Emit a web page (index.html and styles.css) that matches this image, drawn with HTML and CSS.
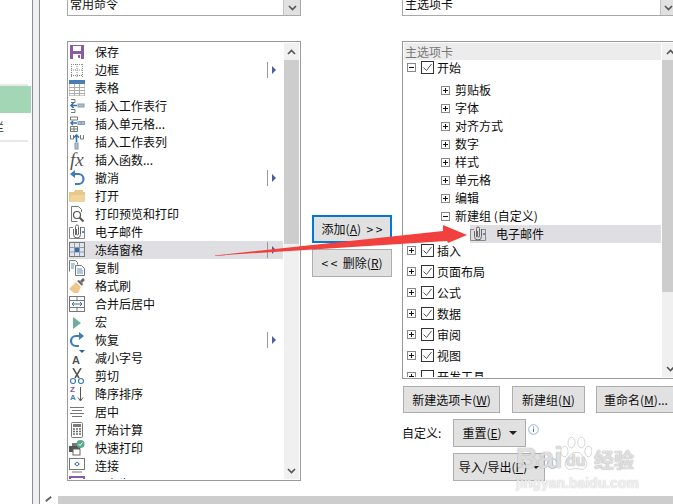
FILE: index.html
```html
<!DOCTYPE html>
<html lang="zh-CN">
  <head>
    <meta charset="UTF-8" />
    <title>自定义功能区</title>
    <link rel="stylesheet" href="styles.css">
  </head>
  <body>
    <svg class="defs" width="0" height="0">
      <symbol id="i-save" viewBox="0 0 16 16"><rect x="1" y="1" width="14" height="14" fill="#8a5ca8"/><rect x="4" y="2" width="8" height="5" fill="#fff"/><rect x="4" y="10" width="8" height="5" fill="#fff"/><rect x="9" y="11" width="2" height="3" fill="#8a5ca8"/></symbol>
      <symbol id="i-border" viewBox="0 0 16 16"><path d="M2.5 2v13M8 2v13M13.5 2v13M2 2.500h12M2 8h12M2 13.500h12" stroke="#8a8a8a" stroke-dasharray="1 1" fill="none"/></symbol>
      <symbol id="i-table" viewBox="0 0 16 16"><rect x="0" y="1" width="16" height="15" fill="#fff" stroke="#999"/><rect x="0" y="0" width="16" height="4" fill="#4a7db3"/><path d="M0 7.500h16M0 10.500h16M0 13.500h16M5.500 4v12M10.500 4v12" stroke="#aaa"/></symbol>
      <symbol id="i-insrow" viewBox="0 0 16 16"><path d="M2 1.500h4v3H2M2 11.500h4v3H2" stroke="#777" fill="none"/><rect x="9" y="6" width="6" height="3" fill="#a9c0d6" stroke="#8a9cad"/><path d="M8 7.500H2M4.500 5L2 7.500 4.500 10" stroke="#2e75b6" stroke-width="1.600" fill="none"/></symbol>
      <symbol id="i-inscell" viewBox="0 0 16 16"><path d="M1.500 1h7v3h-7zM1.500 10.500h7v5h-7zM5 10.500v5M1.500 13h7" stroke="#777" fill="none"/><rect x="9" y="5.500" width="3" height="3" fill="#a9c0d6" stroke="#8a9cad"/><rect x="12.500" y="5.500" width="3" height="3" fill="#a9c0d6" stroke="#8a9cad"/><path d="M8 7H2M4 5L2 7l2 2" stroke="#2e75b6" stroke-width="1.500" fill="none"/></symbol>
      <symbol id="i-inscol" viewBox="0 0 16 16"><path d="M1.500 1v4h3V1M11.500 1v4h3V1" stroke="#777" fill="none"/><rect x="6" y="9" width="3" height="6" fill="#a9c0d6" stroke="#8a9cad"/><path d="M7.500 8V1M5 3.500L7.500 1 10 3.500" stroke="#2e75b6" stroke-width="1.600" fill="none"/></symbol>
      <symbol id="i-undo" viewBox="0 0 16 16"><path d="M4 4h5.500a4.500 4.500 0 0 1 0 10H6" stroke="#3f7cb8" stroke-width="2.200" fill="none"/><path d="M6 0L1 4l5 4z" fill="#3f7cb8"/></symbol>
      <symbol id="i-folder" viewBox="0 0 16 16"><path d="M0 14V4h5l1-2h8v2h2v10z" fill="#e8c88a"/><path d="M0 14l2-7h14v7z" fill="#f0d49c"/></symbol>
      <symbol id="i-preview" viewBox="0 0 16 16"><path d="M2.500 15.500V.5h7l3 3V6" stroke="#777" fill="none"/><path d="M2.500 15.500h6" stroke="#777"/><circle cx="8" cy="9" r="3.500" fill="#fff" stroke="#555" stroke-width="1.200"/><path d="M10.500 11.500l4 4" stroke="#555" stroke-width="2"/></symbol>
      <symbol id="i-mail" viewBox="0 0 16 16"><path d="M4 3.500H.5v11h15v-11H12" stroke="#888" fill="none"/><path d="M6.500 11V2.500a1.500 1.500 0 0 1 3 0V10a1 1 0 0 1-2 0V5M4.500 5v5.500a3.500 3.500 0 0 0 7 0V3" stroke="#666" fill="none"/><rect x="13" y="7" width="2" height="2" fill="#5b8fc7"/></symbol>
      <symbol id="i-freeze" viewBox="0 0 16 16"><rect x=".5" y=".5" width="15" height="14" fill="#dbe6f2" stroke="#777"/><path d="M5.500 1v13M10.500 1v13M1 5.500h14M1 10h14" stroke="#999"/><rect x="6" y="6" width="4" height="4" fill="#2e6fb0"/></symbol>
      <symbol id="i-copy" viewBox="0 0 16 16"><path d="M.5 11.500V.5h6l2 2v2" stroke="#777" fill="#fff"/><path d="M6.500 5.500h6l3 3v7h-9z" stroke="#777" fill="#fff"/><path d="M8 9h5M8 11h6M8 13h6M2 4h4M2 6h3M2 8h3" stroke="#5b8fc7"/></symbol>
      <symbol id="i-brush" viewBox="0 0 16 16"><path d="M0 11l7-7 5 5-3 6H5z" fill="#ecc88c"/><path d="M8 3l5 5 1-2-4-4z" fill="#666"/><path d="M11 3l3-3 2 2-3 3z" fill="#666"/></symbol>
      <symbol id="i-merge" viewBox="0 0 16 16"><rect x=".5" y=".5" width="15" height="15" fill="#fff" stroke="#777"/><path d="M1 4.500h14M1 11.500h14M8 1v3M8 12v3" stroke="#777"/><path d="M3 8h10M5 6L3 8l2 2M11 6l2 2-2 2" stroke="#2e75b6" fill="none"/></symbol>
      <symbol id="i-macro" viewBox="0 0 16 16"><path d="M4 3l8 6-8 6z" fill="#6fae9a"/></symbol>
      <symbol id="i-redo" viewBox="0 0 16 16"><path d="M12 4H7a4.500 4.500 0 0 0 0 10h3" stroke="#3f7cb8" stroke-width="2.200" fill="none"/><path d="M10 0l5 4-5 4z" fill="#3f7cb8"/></symbol>
      <symbol id="i-cut" viewBox="0 0 16 16"><path d="M4 0l6 10M12 0L6 10" stroke="#555" stroke-width="1.500"/><circle cx="4" cy="13" r="2.500" fill="none" stroke="#3f7cb8" stroke-width="1.200"/><circle cx="12" cy="13" r="2.500" fill="none" stroke="#3f7cb8" stroke-width="1.200"/></symbol>
      <symbol id="i-sortarrow" viewBox="0 0 7 16"><path d="M3.500 1v13M1 11.500L3.500 15 6 11.500" stroke="#555" fill="none"/></symbol>
      <symbol id="i-center" viewBox="0 0 16 16"><path d="M1 3.500h14M3 6.500h10M1 9.500h14M3 12.500h10" stroke="#777"/></symbol>
      <symbol id="i-calc" viewBox="0 0 16 16"><rect x="2.500" y=".5" width="11" height="15" rx="1" fill="#fff" stroke="#777"/><rect x="4" y="2" width="8" height="3" fill="#7a7a7a"/><path d="M4 7h2M7 7h2M10 7h2M4 9.500h2M7 9.500h2M10 9.500h2M4 12h2M7 12h2M10 12h2" stroke="#666" stroke-width="1.500"/></symbol>
      <symbol id="i-qprint" viewBox="0 0 16 16"><path d="M0 6h11v6H0z" fill="#555"/><rect x="4" y="9" width="7" height="6" fill="#fff" stroke="#666"/><rect x="3" y="3" width="6" height="3" fill="#777"/><circle cx="11.500" cy="4" r="4" fill="#5aa88f"/><path d="M9.500 4l1.500 1.500 2.500-3" stroke="#fff" fill="none"/></symbol>
      <symbol id="i-connect" viewBox="0 0 16 16"><rect x=".5" y=".5" width="15" height="11" fill="#fff" stroke="#777"/><path d="M3 14h10" stroke="#777"/><path d="M8 3.500L11 6 8 8.500 5 6z" fill="#3f7cb8"/><rect x="7" y="5" width="2" height="2" fill="#fff"/></symbol>
      <symbol id="i-saveas" viewBox="0 0 16 16"><rect x="1" y="1" width="14" height="14" fill="#fff" stroke="#8a5ca8" stroke-width="2"/></symbol>
      <symbol id="i-plus" viewBox="0 0 9 9"><rect x=".5" y=".5" width="8" height="8" fill="#fff" stroke="#888"/><path d="M2 4.500h5M4.500 2v5" stroke="#111"/></symbol>
      <symbol id="i-minus" viewBox="0 0 9 9"><rect x=".5" y=".5" width="8" height="8" fill="#fff" stroke="#888"/><path d="M2 4.500h5" stroke="#111"/></symbol>
      <symbol id="i-check" viewBox="0 0 13 13"><rect x=".5" y=".5" width="12" height="12" fill="#fff" stroke="#333"/><path d="M2.500 6.500l3 3 5-6.500" stroke="#555" fill="none"/></symbol>
      <symbol id="i-empty" viewBox="0 0 13 13"><rect x=".5" y=".5" width="12" height="12" fill="#fff" stroke="#333"/></symbol>
      <symbol id="i-up" viewBox="0 0 9 6"><path d="M1 5l3.500-3.500L8 5" stroke="#555" stroke-width="1.600" fill="none"/></symbol>
      <symbol id="i-down" viewBox="0 0 9 6"><path d="M1 1l3.500 3.500L8 1" stroke="#555" stroke-width="1.600" fill="none"/></symbol>
      <symbol id="i-info" viewBox="0 0 11 11"><circle cx="5.500" cy="5.500" r="4.800" fill="none" stroke="#8fb2dc"/><path d="M5.500 4.500v3.500" stroke="#4a78b0"/><path d="M5.500 2.500v1" stroke="#4a78b0"/></symbol>
    </svg>

    <div class="window">
      <div class="nav">
        <div class="nav-rule nav-rule-top"></div>
        <div class="nav-active"></div>
        <div class="nav-text">栏</div>
        <div class="nav-rule"></div>
      </div>
      <div class="strip"></div>

      <div class="main">
        <div class="content">
          <div class="combos">
            <div class="combo combo-left">
              <span class="combo-text">常用命令</span>
              <span class="combo-btn"><svg class="chev"><use href="#i-down"/></svg></span>
            </div>
            <div class="combo combo-right">
              <span class="combo-text">主选项卡</span>
              <span class="combo-btn"><svg class="chev"><use href="#i-down"/></svg></span>
            </div>
          </div>

          <div class="panels">
            <div class="list list-left">
              <div class="rows">
                <div class="row"><svg class="icon"><use href="#i-save"/></svg>保存</div>
                <div class="row"><svg class="icon"><use href="#i-border"/></svg>边框<span class="more"></span></div>
                <div class="row"><svg class="icon"><use href="#i-table"/></svg>表格</div>
                <div class="row"><svg class="icon"><use href="#i-insrow"/></svg>插入工作表行</div>
                <div class="row"><svg class="icon"><use href="#i-inscell"/></svg>插入单元格...</div>
                <div class="row"><svg class="icon"><use href="#i-inscol"/></svg>插入工作表列</div>
                <div class="row"><span class="icon icon-fx">fx</span>插入函数...</div>
                <div class="row"><svg class="icon"><use href="#i-undo"/></svg>撤消<span class="more"></span></div>
                <div class="row"><svg class="icon"><use href="#i-folder"/></svg>打开</div>
                <div class="row"><svg class="icon"><use href="#i-preview"/></svg>打印预览和打印</div>
                <div class="row"><svg class="icon"><use href="#i-mail"/></svg>电子邮件</div>
                <div class="row selected"><svg class="icon"><use href="#i-freeze"/></svg>冻结窗格<span class="more"></span></div>
                <div class="row"><svg class="icon"><use href="#i-copy"/></svg>复制</div>
                <div class="row"><svg class="icon"><use href="#i-brush"/></svg>格式刷</div>
                <div class="row"><svg class="icon"><use href="#i-merge"/></svg>合并后居中</div>
                <div class="row"><svg class="icon"><use href="#i-macro"/></svg>宏</div>
                <div class="row"><svg class="icon"><use href="#i-redo"/></svg>恢复<span class="more"></span></div>
                <div class="row"><span class="icon icon-shrink">A</span>减小字号</div>
                <div class="row"><svg class="icon"><use href="#i-cut"/></svg>剪切</div>
                <div class="row"><span class="icon icon-sort"><span class="sort-letters"><span class="sort-z">Z</span><span class="sort-a">A</span></span><svg class="sort-arrow"><use href="#i-sortarrow"/></svg></span>降序排序</div>
                <div class="row"><svg class="icon"><use href="#i-center"/></svg>居中</div>
                <div class="row"><svg class="icon"><use href="#i-calc"/></svg>开始计算</div>
                <div class="row"><svg class="icon"><use href="#i-qprint"/></svg>快速打印</div>
                <div class="row"><svg class="icon"><use href="#i-connect"/></svg>连接</div>
                <div class="row"><svg class="icon"><use href="#i-saveas"/></svg>另存为</div>
              </div>
              <div class="scrollbar scrollbar-left">
                <span class="scroll-btn"><svg class="chev"><use href="#i-up"/></svg></span>
                <span class="scroll-thumb"></span>
                <span class="scroll-btn scroll-btn-end"><svg class="chev"><use href="#i-down"/></svg></span>
              </div>
            </div>

            <div class="middle">
              <div class="btn btn-add">添加(<u>A</u>)  &gt; &gt;</div>
              <div class="btn btn-remove">&lt; &lt;  删除(<u>R</u>)</div>
            </div>

            <div class="side">
              <div class="list list-right">
                <div class="tree">
                  <div class="tree-head">主选项卡</div>
                  <div class="tree-tab tree-tab-open"><svg class="exp"><use href="#i-minus"/></svg><svg class="check"><use href="#i-check"/></svg>开始</div>
                  <div class="tree-group"><svg class="exp"><use href="#i-plus"/></svg>剪贴板</div>
                  <div class="tree-group"><svg class="exp"><use href="#i-plus"/></svg>字体</div>
                  <div class="tree-group"><svg class="exp"><use href="#i-plus"/></svg>对齐方式</div>
                  <div class="tree-group"><svg class="exp"><use href="#i-plus"/></svg>数字</div>
                  <div class="tree-group"><svg class="exp"><use href="#i-plus"/></svg>样式</div>
                  <div class="tree-group"><svg class="exp"><use href="#i-plus"/></svg>单元格</div>
                  <div class="tree-group"><svg class="exp"><use href="#i-plus"/></svg>编辑</div>
                  <div class="tree-group"><svg class="exp"><use href="#i-minus"/></svg>新建组 (自定义)</div>
                  <div class="tree-item"><svg class="icon"><use href="#i-mail"/></svg>电子邮件</div>
                  <div class="tree-tab tree-tab-after"><svg class="exp"><use href="#i-plus"/></svg><svg class="check"><use href="#i-check"/></svg>插入</div>
                  <div class="tree-tab"><svg class="exp"><use href="#i-plus"/></svg><svg class="check"><use href="#i-check"/></svg>页面布局</div>
                  <div class="tree-tab"><svg class="exp"><use href="#i-plus"/></svg><svg class="check"><use href="#i-check"/></svg>公式</div>
                  <div class="tree-tab"><svg class="exp"><use href="#i-plus"/></svg><svg class="check"><use href="#i-check"/></svg>数据</div>
                  <div class="tree-tab"><svg class="exp"><use href="#i-plus"/></svg><svg class="check"><use href="#i-check"/></svg>审阅</div>
                  <div class="tree-tab"><svg class="exp"><use href="#i-plus"/></svg><svg class="check"><use href="#i-check"/></svg>视图</div>
                  <div class="tree-tab"><svg class="exp"><use href="#i-plus"/></svg><svg class="check"><use href="#i-empty"/></svg>开发工具</div>
                </div>
                <div class="scrollbar scrollbar-right">
                  <span class="scroll-btn"><svg class="chev"><use href="#i-up"/></svg></span>
                  <span class="scroll-thumb"></span>
                  <span class="scroll-btn scroll-btn-end"><svg class="chev"><use href="#i-down"/></svg></span>
                </div>
              </div>

              <div class="tree-actions">
                <div class="btn btn-new-tab">新建选项卡(<u>W</u>)</div>
                <div class="btn btn-new-group">新建组(<u>N</u>)</div>
                <div class="btn btn-rename">重命名(<u>M</u>)...</div>
              </div>
              <div class="custom-row">
                <span class="custom-label">自定义:</span>
                <div class="btn btn-reset">重置(<u>E</u>)<span class="caret"></span></div>
                <svg class="info"><use href="#i-info"/></svg>
              </div>
              <div class="custom-row custom-row-second">
                <div class="btn btn-import">导入/导出(<u>P</u>)<span class="caret caret-small"></span></div>
                <svg class="info"><use href="#i-info"/></svg>
              </div>
            </div>
          </div>
        </div>

        <div class="hscroll">
          <span class="hscroll-btn"><span class="hscroll-arrow"></span></span>
          <span class="hscroll-thumb"></span>
        </div>
      </div>

      <!-- red arrow drawn on top of the dialog -->
      <svg class="annotation" width="673" height="504" viewBox="0 0 673 504">
        <polygon points="210,256 443,231 443,225 467,235 448,243 447,241" fill="#f1403e"/>
      </svg>

      <div class="watermark">
        <div class="wm-top">
          <span class="wm-bai">Bai</span>
          <span class="wm-paw">
            <svg class="paw" viewBox="0 0 36 42">
              <g class="paw-shape">
                <ellipse cx="5" cy="17" rx="4" ry="6"/>
                <ellipse cx="13" cy="7" rx="4" ry="6"/>
                <ellipse cx="24" cy="7" rx="4" ry="6"/>
                <ellipse cx="32" cy="17" rx="4" ry="6"/>
                <path d="M18 18c-6 0-8 5-11 9-3 5 0 11 6 10 3-1 7-1 10 0 6 1 9-5 6-10-3-4-5-9-11-9z"/>
              </g>
            </svg>
            <span class="wm-du">du</span>
          </span>
          <span class="wm-jy">经验</span>
        </div>
        <div class="wm-url">jingyan.baidu.com</div>
      </div>
    </div>
  </body>
</html>
```

FILE: styles.css
```css
* {
  box-sizing: border-box;
}

html,
body {
  margin: 0;
  padding: 0;
  background-color: #fff;
}

body {
  font-family: "Noto Sans CJK SC", "Noto Sans", sans-serif;
  font-size: 12px;
  line-height: 18px;
  color: #0d0d0d;
}

.defs {
  position: absolute;
}

.window {
  position: relative;
  display: flex;
  width: 673px;
  height: 504px;
  overflow: hidden;
}

/* left nav, cut off by the screenshot */
.nav {
  flex: none;
  width: 32px;
  padding-top: 84px;
  overflow: hidden;
}

.nav-rule {
  width: 28px;
  height: 2px;
  background-color: #e8e8e8;
}

.nav-active {
  width: 31px;
  height: 27px;
  background-color: #a3d6b5;
}

.nav-text {
  height: 27px;
  margin-left: -8px;
  padding-top: 5px;
  color: #333;
}

.strip {
  flex: none;
  width: 8px;
  background-color: #f0f0f0;
  border-left: 1px solid #8e8e96;
  border-right: 1px solid #8e8e96;
}

.main {
  flex: none;
  width: 633px;
  display: flex;
  flex-direction: column;
}

.content {
  height: 496px;
  padding-left: 27px;
  overflow: hidden;
}

.combos {
  display: flex;
  gap: 101px;
  height: 16px;
}

.combo {
  flex: none;
  display: flex;
  justify-content: space-between;
  height: 16px;
  border: 1px solid #a8a8a8;
  border-top: none;
  overflow: hidden;
}

.combo-left {
  width: 234px;
}

.combo-right {
  width: 290px;
}

.combo-text {
  margin: -5px 0 0 2px;
}

.combo-btn {
  width: 17px;
  display: flex;
  align-items: center;
  justify-content: center;
  background-color: #e1e1e1;
  border-left: 1px solid #c4c4c4;
}

.combo-right .combo-btn {
  margin-right: 15px;
  width: 16px;
}

.chev {
  width: 9px;
  height: 6px;
}

.panels {
  display: flex;
  margin-top: 25px;
}

.list {
  flex: none;
  display: flex;
  padding: 1px;
  background-color: #fff;
  border: 1px solid #999;
  overflow: hidden;
}

.list-left {
  width: 234px;
  height: 440px;
}

.rows {
  flex: none;
  width: 215px;
  height: 436px;
  padding-right: 1px;
  overflow: hidden;
}

.row {
  display: flex;
  align-items: center;
  height: 18px;
}

.row.selected {
  background-color: #dfdfe3;
}

.icon {
  flex: none;
  width: 16px;
  height: 16px;
  margin-right: 10px;
}

.icon-fx {
  font-family: "Liberation Serif", serif;
  font-style: italic;
  font-size: 19px;
  line-height: 16px;
  color: #555;
  padding-left: 1px;
}

.icon-shrink {
  position: relative;
  padding: 4px 0 0 3px;
  font-family: "Liberation Sans", sans-serif;
  font-weight: bold;
  font-size: 11px;
  line-height: 12px;
  color: #555;
}

.icon-shrink::after {
  content: "";
  position: absolute;
  left: 10px;
  top: 0;
  border-top: 3px solid #2e5f93;
  border-left: 3px solid transparent;
  border-right: 3px solid transparent;
}

.icon-sort {
  display: flex;
  font-family: "Liberation Sans", sans-serif;
  font-weight: bold;
  font-size: 8px;
  line-height: 8px;
}

.sort-letters {
  display: flex;
  flex-direction: column;
  width: 8px;
  padding-left: 1px;
}

.sort-z {
  color: #7a4fa3;
}

.sort-a {
  color: #3f7cb8;
}

.sort-arrow {
  width: 7px;
  height: 16px;
}

.more {
  margin-left: auto;
  margin-right: 6px;
  width: 10px;
  height: 16px;
  border-left: 1px solid #999;
  position: relative;
}

.more::after {
  content: "";
  position: absolute;
  left: 4px;
  top: 4px;
  border-left: 4px solid #4f5f9c;
  border-top: 4px solid transparent;
  border-bottom: 4px solid transparent;
}

.scrollbar {
  flex: none;
  display: flex;
  flex-direction: column;
  background-color: #f0f0f0;
}

.scrollbar-left {
  width: 15px;
}

.scrollbar-right {
  width: 16px;
}

.scroll-btn {
  flex: none;
  height: 17px;
  display: flex;
  align-items: center;
  justify-content: center;
}

.scroll-btn-end {
  margin-top: auto;
}

.scroll-thumb {
  flex: none;
  background-color: #cdcdcd;
}

.scrollbar-left .scroll-thumb {
  height: 184px;
}

.scrollbar-right .scroll-thumb {
  height: 232px;
}

.middle {
  flex: none;
  width: 101px;
  padding: 174px 0 0 11px;
}

.btn {
  display: flex;
  align-items: center;
  justify-content: center;
  background-color: #e1e1e1;
  border: 1px solid #adadad;
  white-space: pre;
}

.btn-add {
  width: 80px;
  height: 28px;
  border: 2px solid #0078d7;
}

.btn-remove {
  width: 80px;
  height: 28px;
  margin-top: 6px;
}

.side {
  flex: none;
  width: 280px;
}

.list-right {
  width: 280px;
  height: 338px;
}

.tree {
  flex: none;
  width: 258px;
  height: 334px;
  padding-right: 1px;
  overflow: hidden;
}

.tree-head {
  height: 17px;
  padding-left: 1px;
  background-color: #ececec;
  color: #777;
}

.tree-tab {
  display: flex;
  align-items: center;
  height: 21px;
  padding-left: 3px;
}

.tree-tab-open {
  margin-top: -3px;
  margin-bottom: 3px;
}

.tree-tab-after {
  margin-top: -3px;
}

.exp {
  flex: none;
  width: 9px;
  height: 9px;
  margin-right: 5px;
}

.check {
  flex: none;
  width: 13px;
  height: 13px;
  margin-right: 3px;
}

.tree-group {
  display: flex;
  align-items: center;
  height: 18px;
  padding-left: 37px;
}

.tree-item {
  display: flex;
  align-items: center;
  height: 18px;
  margin-left: 66px;
  background-color: #dfdfe3;
}

.tree-actions {
  display: flex;
  margin: 7px 0 0 1px;
}

.tree-actions .btn {
  flex: none;
  height: 27px;
}

.btn-new-tab {
  width: 97px;
}

.btn-new-group {
  width: 73px;
  margin-left: 12px;
}

.btn-rename {
  width: 80px;
  margin-left: 11px;
}

.custom-row {
  display: flex;
  align-items: center;
  margin: 6px 0 0 1px;
}

.custom-row-second {
  padding-left: 50px;
}

.custom-label {
  flex: none;
  width: 50px;
  margin-left: -1px;
}

.btn-reset,
.btn-import {
  flex: none;
  height: 28px;
}

.btn-reset {
  width: 73px;
  margin-left: 1px;
}

.btn-import {
  width: 92px;
}

.caret {
  margin-left: 7px;
  border-top: 4px solid #222;
  border-left: 4px solid transparent;
  border-right: 4px solid transparent;
}

.caret-small {
  margin-left: 6px;
  border-top-width: 3px;
  border-left-width: 3px;
  border-right-width: 3px;
}

.info {
  flex: none;
  width: 11px;
  height: 11px;
  margin: -8px 0 0 2px;
}

.hscroll {
  display: flex;
  height: 8px;
}

.hscroll-btn {
  flex: none;
  width: 18px;
  position: relative;
}

.hscroll-arrow {
  position: absolute;
  left: 5px;
  top: 2px;
  width: 7px;
  height: 2px;
  background-color: #666;
  transform: rotate(-40deg);
}

.hscroll-thumb {
  flex: 1;
  background-color: #cdcdcd;
}

.annotation {
  position: absolute;
  left: 0;
  top: 0;
}

/* baidu watermark over the bottom right corner */
.watermark {
  position: absolute;
  left: 516px;
  top: 431px;
  width: 126px;
  opacity: 0.9;
}

.wm-top {
  display: flex;
  align-items: flex-end;
  height: 45px;
  color: rgba(255, 255, 255, 0.6);
  text-shadow: 0 0 1px #aaa, 0 0 1px #aaa;
  font-family: "Liberation Sans", sans-serif;
  font-weight: bold;
}

.wm-bai {
  font-size: 30px;
  line-height: 36px;
  width: 44px;
}

.wm-paw {
  position: relative;
  width: 32px;
  height: 40px;
  flex: none;
}

.paw {
  width: 32px;
  height: 38px;
}

.paw-shape {
  fill: rgba(255, 255, 255, 0.35);
  stroke: #c0c0c0;
  stroke-width: 0.8;
}

.wm-du {
  position: absolute;
  left: 6px;
  bottom: 6px;
  font-size: 16px;
  line-height: 18px;
}

.wm-jy {
  margin-left: 2px;
  font-family: "Noto Sans CJK SC", sans-serif;
  font-size: 20px;
  line-height: 32px;
}

.wm-url {
  font-family: "Liberation Sans", sans-serif;
  font-weight: bold;
  font-size: 14px;
  line-height: 14px;
  color: rgba(255, 255, 255, 0.8);
  text-shadow: 0 0 1px #aaa;
  white-space: nowrap;
}
```
